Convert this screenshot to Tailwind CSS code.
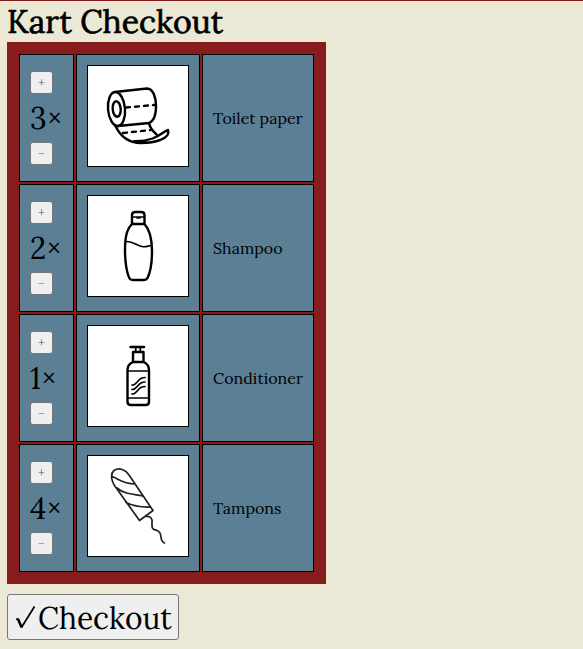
<!DOCTYPE html>
<html lang="en">
<head>
<meta charset="utf-8">
<title>Kart Checkout</title>
<script src="https://cdn.jsdelivr.net/npm/@tailwindcss/browser@4"></script>
</head>
<body class="h-[649px] overflow-hidden border-t border-[#881c1c] bg-[#ebe9d5] pl-[7px] font-[Lora,'Liberation_Serif',serif] text-black">
<h1 class="h-[41px] w-max whitespace-nowrap text-[32px] leading-[41px] [-webkit-text-stroke:0.7px_black]">Kart Checkout</h1>
<main class="grid w-[319px] grid-cols-[55px_124px_112px] grid-rows-[repeat(4,128px)] gap-[2px] bg-[#881c1c] p-3 *:border *:border-black *:bg-[#5b7f95]">
  <div class="flex flex-col justify-between px-[10px] pt-4 pb-4">
    <button class="size-[23px] rounded-[3px] border border-[#767676] bg-[#efefef] text-[13px] leading-none text-[#555]">+</button>
    <div class="flex h-12 items-center text-[30px] leading-none"><span>3×</span></div>
    <button class="size-[23px] rounded-[3px] border border-[#767676] bg-[#efefef] text-[13px] leading-none text-[#888]">−</button>
  </div>
  <div class="p-[10px]"><svg class="size-[102px] border border-black bg-white" viewBox="0 0 100 100" fill="none" stroke="#000" stroke-width="2.4" stroke-linecap="round" stroke-linejoin="round">
    <ellipse cx="28.5" cy="43" rx="8.5" ry="17" transform="rotate(-5 28.5 43)"/><ellipse cx="28.7" cy="43" rx="4" ry="7.8" transform="rotate(-5 28.7 43)"/>
    <path d="M27 26 59 22.5C65 22.5 68 31 68 40C68 49 66 55 61 57L30 60M27 59C32 70 40 77 53 77C66 77 83 73 80 64C75 65 68 76 46 75.2M61 57C62 63 66 66 69 69"/>
    <path d="M38 41.5 66 39M35 67 63 64" stroke-dasharray="4 5"/>
  </svg></div>
  <div class="flex items-center px-[10px]"><span class="whitespace-nowrap text-base">Toilet paper</span></div>

  <div class="flex flex-col justify-between px-[10px] pt-4 pb-4">
    <button class="size-[23px] rounded-[3px] border border-[#767676] bg-[#efefef] text-[13px] leading-none text-[#555]">+</button>
    <div class="flex h-12 items-center text-[30px] leading-none"><span>2×</span></div>
    <button class="size-[23px] rounded-[3px] border border-[#767676] bg-[#efefef] text-[13px] leading-none text-[#888]">−</button>
  </div>
  <div class="p-[10px]"><svg class="size-[102px] border border-black bg-white" viewBox="0 0 100 100" fill="none" stroke="#000" stroke-width="2.4" stroke-linecap="round" stroke-linejoin="round">
    <path d="M44 28V19Q44 16 47.5 16H53Q56.5 16 56.5 19V28ZM44 28C38 34 37 43 37 55C37 66 39 79 42 83Q43 84 45 84H56Q58.5 84 59.5 82C62 77 64 66 64 55C64 42 62 34 56.5 28"/>
    <path d="M45 21H56M49 22H52M38 45.5C46 45 49 50.5 55 50.7C59 51 60 49.8 63 49.5" stroke-width="1.6"/>
  </svg></div>
  <div class="flex items-center px-[10px]"><span class="whitespace-nowrap text-base">Shampoo</span></div>

  <div class="flex flex-col justify-between px-[10px] pt-4 pb-4">
    <button class="size-[23px] rounded-[3px] border border-[#767676] bg-[#efefef] text-[13px] leading-none text-[#555]">+</button>
    <div class="flex h-12 items-center text-[30px] leading-none"><span>1×</span></div>
    <button class="size-[23px] rounded-[3px] border border-[#767676] bg-[#efefef] text-[13px] leading-none text-[#888]">−</button>
  </div>
  <div class="p-[10px]"><svg class="size-[102px] border border-black bg-white" viewBox="0 0 100 100" fill="none" stroke="#000" stroke-width="2.4" stroke-linecap="round" stroke-linejoin="round">
    <path d="M42.5 21H56M45 36V26H55.5V36M45 36C41.5 37.5 39.5 40 39.5 44V76Q39.5 79 43 79H57.5Q61 79 61 76V44C61 40 59 37.5 55.5 36Z"/>
    <path d="M47.7 22V26M52.3 22V26M40 45H61M40 72H61" stroke-width="1.7"/>
    <path d="M44 59C50 59 49 51.5 57 51.5M44 63.5C50 63.5 49 56 57 56M44 68C50 68 49 60.5 57 60.5" stroke-width="1.7"/>
  </svg></div>
  <div class="flex items-center px-[10px]"><span class="whitespace-nowrap text-base">Conditioner</span></div>

  <div class="flex flex-col justify-between px-[10px] pt-4 pb-4">
    <button class="size-[23px] rounded-[3px] border border-[#767676] bg-[#efefef] text-[13px] leading-none text-[#555]">+</button>
    <div class="flex h-12 items-center text-[30px] leading-none"><span>4×</span></div>
    <button class="size-[23px] rounded-[3px] border border-[#767676] bg-[#efefef] text-[13px] leading-none text-[#888]">−</button>
  </div>
  <div class="p-[10px]"><svg class="size-[102px] border border-black bg-white" viewBox="0 0 100 100" fill="none" stroke="#222" stroke-width="1.7" stroke-linecap="round" stroke-linejoin="round">
    <path d="M51.5 64.5 27.5 31C22 23 23 17 26 14.5C31 11 38 14 41 19L65 54.5ZM24 20.5C31 23 33 27 45.5 28M29 32C36 38 44 38 54.5 40M38 46.5C45 50 51 51.5 62.5 51"/>
    <path d="M58 60.5C63 60 64.5 63 64 66C63.5 75 66 73 69 74.5C76 77 70 84 76.5 87"/>
  </svg></div>
  <div class="flex items-center px-[10px]"><span class="whitespace-nowrap text-base">Tampons</span></div>
</main>
<button class="mt-[10px] flex h-[46px] w-[172px] items-center rounded-[3px] border border-[#767676] bg-[#efefef] pl-[7px]">
  <svg class="h-6 w-[22px] shrink-0" viewBox="0 0 22 24" fill="none" stroke="#000"><path d="M1 14.5 3.5 13.5" stroke-width="1.5"/><path d="M3 14 6.6 22.3" stroke-width="2.6"/><path d="M6.3 22.7 19.5 1.5" stroke-width="1.7"/></svg>
  <span class="ml-px whitespace-nowrap pt-0.5 text-[30px] leading-none">Checkout</span>
</button>
</body>
</html>
